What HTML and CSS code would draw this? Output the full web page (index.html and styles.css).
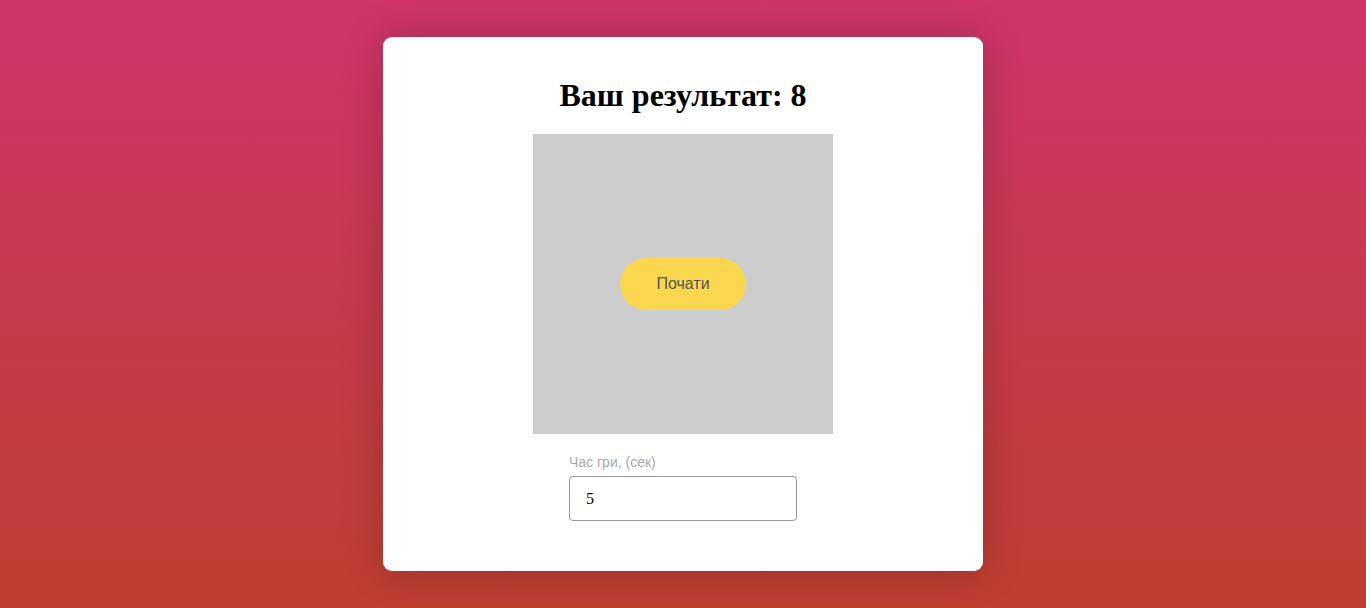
FILE: index.html
```html
<!DOCTYPE html>
<html lang="uk">
<head>
<meta charset="utf-8">
<title>Гра</title>
<link rel="stylesheet" href="styles.css">
</head>
<body>
<main class="page">
  <section class="card">
    <h1 class="title">Ваш результат: 8</h1>
    <div class="board">
      <button class="start">Почати</button>
    </div>
    <div class="field">
      <label class="field-label" for="time">Час гри, (сек)</label>
      <input class="field-input" id="time" type="number" value="5">
    </div>
  </section>
</main>
</body>
</html>
```
FILE: styles.css
```css
html, body {
  margin: 0;
  height: 100%;
}
body {
  background: linear-gradient(to bottom, #d0346a 0%, #bd3f30 100%);
  font-family: "Liberation Serif", serif;
}
.page {
  display: flex;
  justify-content: center;
  padding-top: 37px;
}
.card {
  width: 600px;
  box-sizing: border-box;
  background: #fff;
  border-radius: 9px;
  box-shadow: 0 0 40px rgba(0, 0, 0, 0.22);
  padding: 40px 0 50px;
  display: flex;
  flex-direction: column;
  align-items: center;
}
.title {
  margin: 0 0 20px;
  font-size: 32px;
  font-weight: bold;
  line-height: 37px;
  color: #000;
}
.board {
  width: 300px;
  height: 300px;
  background: #cdcdcd;
  display: flex;
  align-items: center;
  justify-content: center;
}
.start {
  width: 126px;
  height: 52px;
  border: none;
  border-radius: 26px;
  background: #fbd74f;
  color: #555;
  font-family: "Liberation Sans", Arial, sans-serif;
  font-size: 16px;
  cursor: pointer;
}
.field {
  width: 228px;
  margin-top: 20px;
  display: flex;
  flex-direction: column;
}
.field-label {
  font-family: "Liberation Sans", Arial, sans-serif;
  font-size: 14px;
  line-height: 16px;
  color: #aaa;
  margin-bottom: 6px;
}
.field-input {
  box-sizing: border-box;
  width: 228px;
  height: 45px;
  border: 1px solid #999;
  border-radius: 4px;
  padding: 0 16px;
  font-family: "Liberation Serif", serif;
  font-size: 16px;
  color: #000;
  outline: none;
  -moz-appearance: textfield;
}
.field-input::-webkit-inner-spin-button,
.field-input::-webkit-outer-spin-button {
  -webkit-appearance: none;
  margin: 0;
}
```
